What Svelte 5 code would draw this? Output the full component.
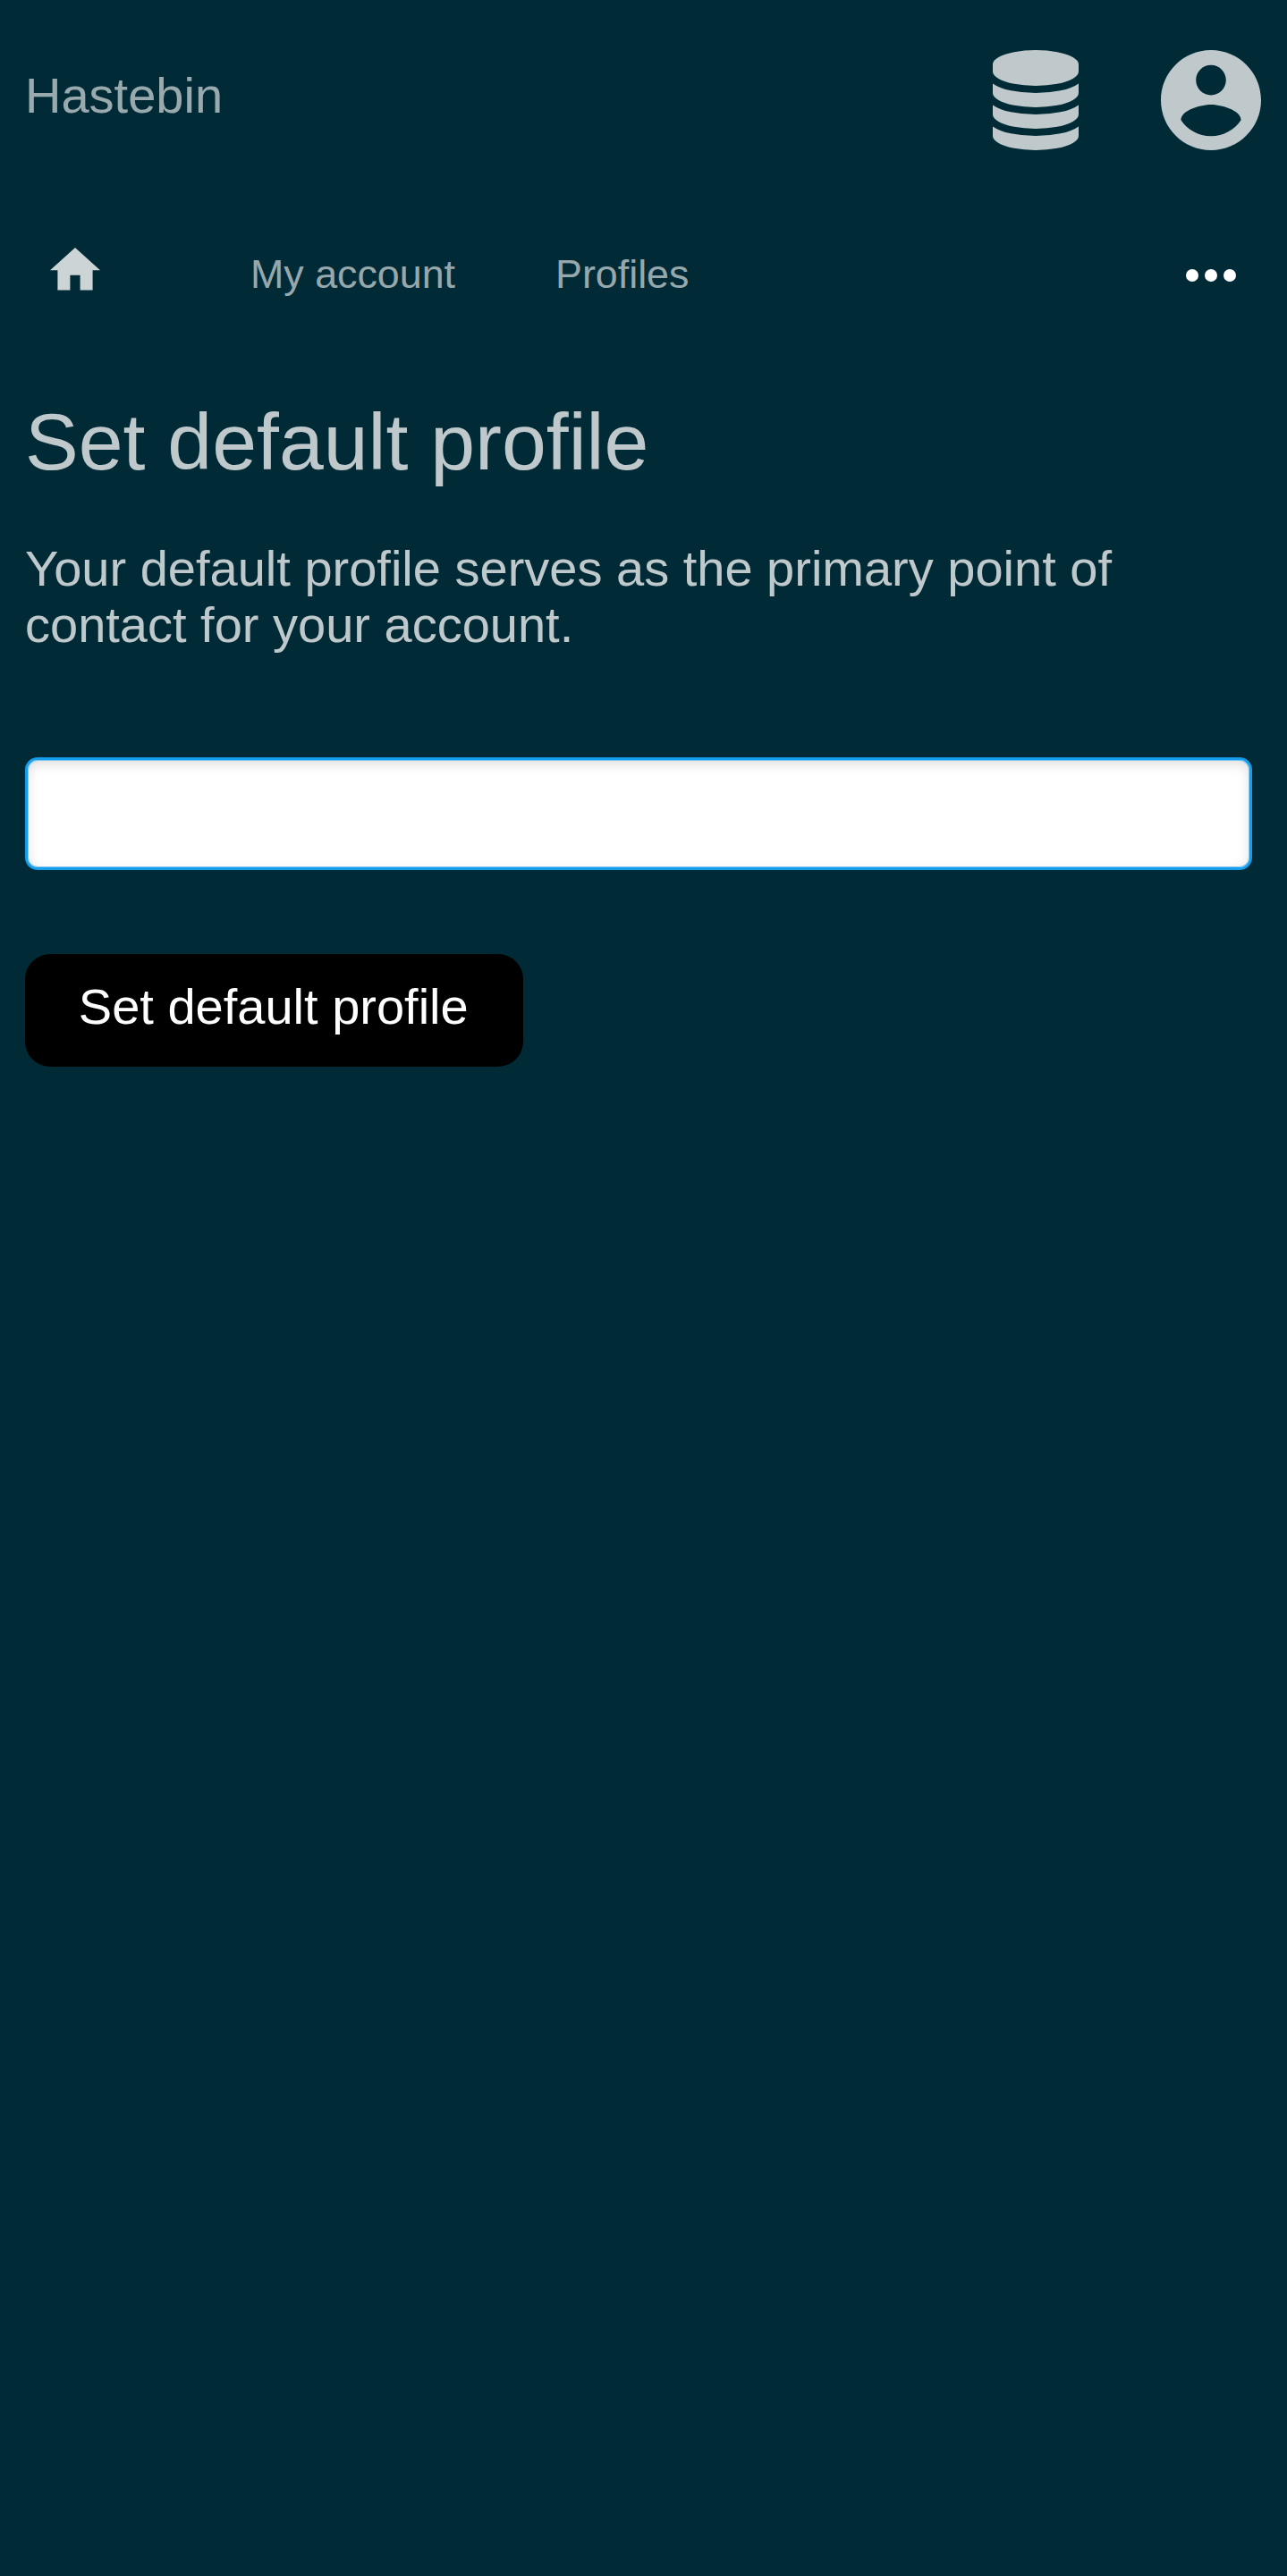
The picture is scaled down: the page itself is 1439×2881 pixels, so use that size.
<script>
  let profile = $state('');
</script>

<div class="page">
  <header>
    <a class="brand" href="#top">Hastebin</a>
    <div class="actions">
      <svg viewBox="0 0 1792 1792" aria-label="Storage">
        <path d="M896 768q237 0 443-43t325-127v170q0 69-103 128t-280 93.5-385 34.5-385-34.5-280-93.5-103-128v-170q119 84 325 127t443 43zm0 768q237 0 443-43t325-127v170q0 69-103 128t-280 93.5-385 34.5-385-34.5-280-93.5-103-128v-170q119 84 325 127t443 43zm0-384q237 0 443-43t325-127v170q0 69-103 128t-280 93.5-385 34.5-385-34.5-280-93.5-103-128v-170q119 84 325 127t443 43zm0-1152q208 0 385 34.5t280 93.5 103 128v128q0 69-103 128t-280 93.5-385 34.5-385-34.5-280-93.5-103-128v-128q0-69 103-128t280-93.5 385-34.5z" />
      </svg>
      <svg viewBox="2 2 20 20" aria-label="Account">
        <path d="M12 2C6.48 2 2 6.48 2 12s4.48 10 10 10 10-4.48 10-10S17.52 2 12 2zm0 3c1.66 0 3 1.34 3 3s-1.34 3-3 3-3-1.34-3-3 1.34-3 3-3zm0 14.2c-2.5 0-4.71-1.28-6-3.22.03-1.99 4-3.08 6-3.08 1.99 0 5.97 1.09 6 3.08-1.29 1.94-3.5 3.22-6 3.22z" />
      </svg>
    </div>
  </header>

  <nav>
    <a class="home" href="#home" aria-label="Home">
      <svg viewBox="2 3 20 17"><path d="M10 20v-6h4v6h5v-8h3L12 3 2 12h3v8z" /></svg>
    </a>
    <a href="#account">My account</a>
    <a href="#profiles">Profiles</a>
    <button class="more" aria-label="More">
      <svg viewBox="4 10 16 4">
        <circle cx="6" cy="12" r="2" /><circle cx="12" cy="12" r="2" /><circle cx="18" cy="12" r="2" />
      </svg>
    </button>
  </nav>

  <main>
    <h1>Set default profile</h1>
    <p>Your default profile serves as the primary point of contact for your account.</p>
    <input type="text" aria-label="Profile" bind:value={profile} />
    <button class="submit">Set default profile</button>
  </main>
</div>

<style>
  :global(body) {
    margin: 0;
    background: #002b36;
  }
  .page {
    box-sizing: border-box;
    min-height: 2881px;
    background: #002b36;
    font: 56px/63px 'Liberation Sans', Arial, sans-serif;
    color: rgba(255, 255, 255, 0.75);
  }
  a {
    color: rgba(255, 255, 255, 0.6);
    text-decoration: none;
  }
  svg {
    display: block;
    fill: currentColor;
  }
  header {
    display: flex;
    justify-content: space-between;
    height: 168px;
    padding: 0 29px 0 28px;
  }
  .brand {
    padding-top: 75px;
  }
  .actions {
    display: flex;
    gap: 84px;
    padding-top: 56px;
  }
  .actions svg {
    width: 112px;
    height: 112px;
  }
  nav {
    display: flex;
    height: 168px;
    padding: 56px 57px 0 56px;
    font-size: 44.8px;
    line-height: 56px;
  }
  nav a {
    padding-top: 54px;
    margin-right: 112px;
  }
  nav .home {
    padding-top: 53.4px;
    margin-right: 168px;
    color: rgba(255, 255, 255, 0.8);
  }
  .home svg {
    width: 56px;
    height: 47.6px;
  }
  .more {
    margin-left: auto;
    padding: 77px 0 0;
    border: 0;
    background: none;
    color: #fff;
    align-self: flex-start;
  }
  .more svg {
    width: 56px;
    height: 14px;
  }
  main {
    display: flex;
    flex-direction: column;
    align-items: flex-start;
    padding: 51px 28px 0;
  }
  h1 {
    margin: 0;
    font-size: 89.6px;
    font-weight: 400;
    line-height: 103px;
  }
  p {
    margin: 58px 0 0;
  }
  input {
    box-sizing: border-box;
    width: 1372px;
    height: 126px;
    margin: 117px 0 0;
    padding: 0 28px;
    border: 3px solid #159eec;
    border-radius: 14px;
    outline: none;
    background: #fff;
    box-shadow: inset 0 0 0 1px #84c8f1, inset 0 4px 14px rgba(0, 0, 0, 0.14);
    font: inherit;
    color: #000;
  }
  .submit {
    width: 556.5px;
    height: 126px;
    margin: 94px 0 0;
    padding: 0 1px 10px 0;
    border: 0;
    border-radius: 28px;
    background: #000;
    font: inherit;
    color: #fff;
  }
</style>
